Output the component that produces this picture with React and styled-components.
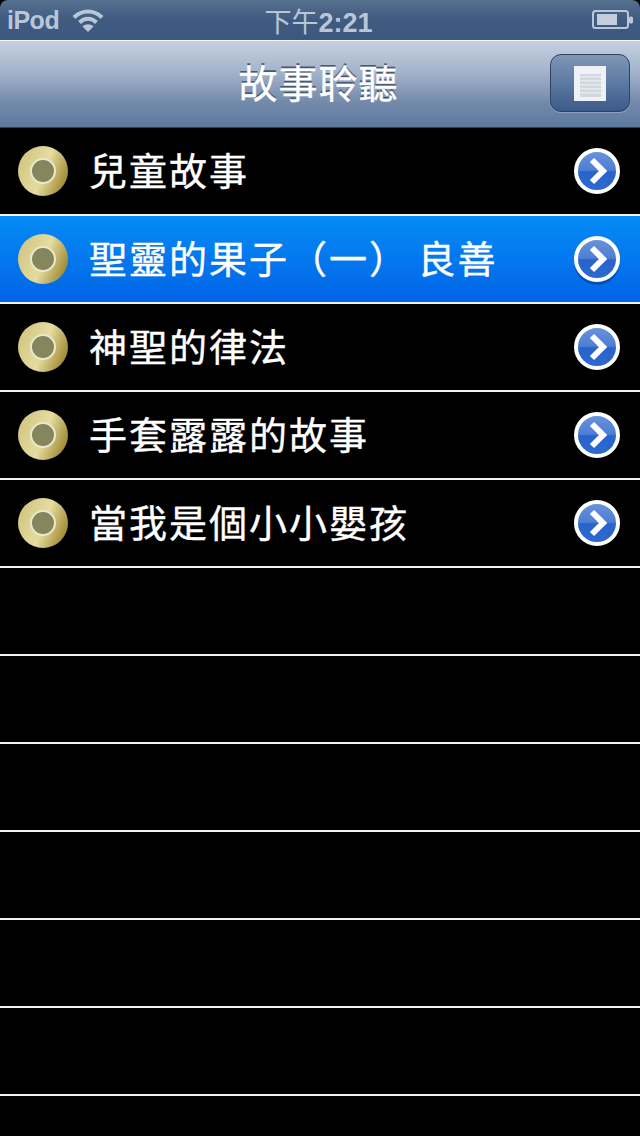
import React from 'react'
import styled, { createGlobalStyle } from 'styled-components'

const GlobalStyle = createGlobalStyle`
    html, body {
        margin: 0;
        padding: 0;
        background: #000;
    }
`

const Screen = styled.div`
    width: 640px;
    height: 1136px;
    overflow: hidden;
    background: #000;
    color: #fff;
    font-family: "Liberation Sans", "Noto Sans CJK TC", sans-serif;
`

const StatusBar = styled.div`
    height: 40px;
    box-sizing: border-box;
    border-radius: 8px 8px 0 0;
    padding: 0 6px 0 7px;
    display: grid;
    grid-template-columns: 1fr auto 1fr;
    align-items: center;
    background: linear-gradient(#56708f, #405b81 50%, #3d5880);
    color: #b9c6d7;
`

const StatusLeft = styled.div`
    display: flex;
    align-items: center;
    gap: 13px;
`

const Carrier = styled.span`
    font-size: 25px;
    font-weight: 700;
    letter-spacing: -0.5px;
`

const Clock = styled.div`
    margin-left: -4px;
    font-size: 27px;
    white-space: nowrap;
    b {
        font-weight: 700;
    }
`

const StatusRight = styled.div`
    display: flex;
    justify-content: flex-end;
`

const NavBar = styled.div`
    height: 88px;
    box-sizing: border-box;
    border-top: 1px solid #f4f6fa;
    border-bottom: 1px solid #2d3f5a;
    display: grid;
    grid-template-columns: 1fr auto 1fr;
    align-items: center;
    padding: 0 10px 0 7px;
    background: linear-gradient(#c6d1e1, #a3b3cb 36%, #7389aa 72%, #5d789f);
`

const NavTitle = styled.h1`
    grid-column: 2;
    margin: 0;
    font-size: 39px;
    line-height: 1;
    font-weight: 400;
    -webkit-text-stroke: 0.4px #fff;
    letter-spacing: 1px;
    color: #fff;
    text-shadow: 0 -2px 0 #4a5a74;
`

const NavButton = styled.button`
    grid-column: 3;
    justify-self: end;
    width: 80px;
    height: 58px;
    margin-bottom: 2px;
    padding: 0;
    display: flex;
    align-items: center;
    justify-content: center;
    box-sizing: border-box;
    border: 1px solid #2f4361;
    border-radius: 11px;
    background: linear-gradient(#7f95b5, #5d7aa2 50%, #3b5a88);
    box-shadow: 0 1px 0 #8fa2bd;
`

const RowList = styled.div`
    display: flex;
    flex-direction: column;
`

const Row = styled.div`
    height: 88px;
    flex-shrink: 0;
    box-sizing: border-box;
    border-bottom: 2px solid #f2f2f2;
    padding: 0 20px 0 18px;
    display: flex;
    align-items: center;
    background: ${p => p.$selected ? 'linear-gradient(#058bf6, #0264e6)' : '#000'};
`

const RowLabel = styled.span`
    flex: 1;
    margin: 2px 0 0 21px;
    font-size: 38px;
    font-weight: 400;
    -webkit-text-stroke: 0.4px #fff;
    line-height: 1;
    letter-spacing: 2px;
    word-spacing: -4px;
    white-space: pre;
    color: #fff;
`

const stories = [
    '兒童故事',
    '聖靈的果子（一） 良善',
    '神聖的律法',
    '手套露露的故事',
    '當我是個小小嬰孩',
    '', '', '', '', '', '', '',
]

function WifiIcon() {
    return (
        <svg width="32" height="24" viewBox="0 0 32 24">
            <path d="M2 9.5C10 1.5 22 1.5 30 9.5" fill="none" stroke="#b9c6d7" strokeWidth="4" />
            <path d="M7.5 14.5C12.5 9.5 19.5 9.5 24.5 14.5" fill="none" stroke="#b9c6d7" strokeWidth="4" />
            <path d="M16 24L10.5 18.5C13.5 15.5 18.5 15.5 21.5 18.5Z" fill="#b9c6d7" />
        </svg>
    )
}

function BatteryIcon() {
    return (
        <svg width="42" height="22" viewBox="0 0 42 22">
            <rect x="1" y="2" width="35" height="17" rx="2.5" fill="none" stroke="#b9c6d7" strokeWidth="2" />
            <rect x="5" y="5" width="20" height="11" fill="#c3cedc" />
            <rect x="37" y="7.5" width="4" height="7" rx="1.5" fill="#b9c6d7" />
        </svg>
    )
}

function PageIcon() {
    return (
        <svg width="32" height="35" viewBox="0 0 32 35">
            <rect width="32" height="35" fill="#eef1f5" />
            <rect x="6" y="8" width="21" height="23" fill="#d2d8e0" />
            {[10, 14, 18, 22, 26].map(y => (
                <rect key={y} x="6" y={y} width="21" height="1.5" fill="#e6e9ee" />
            ))}
        </svg>
    )
}

function BulletIcon({ id }) {
    return (
        <svg width="50" height="50" viewBox="0 0 50 50">
            <defs>
                <linearGradient id={id} x1="0" y1="0.2" x2="1" y2="0.6">
                    <stop offset="0" stopColor="#d0c47e" />
                    <stop offset="0.55" stopColor="#e4dca0" />
                    <stop offset="1" stopColor="#a08a34" />
                </linearGradient>
            </defs>
            <circle cx="25" cy="25" r="25" fill={`url(#${id})`} />
            <circle cx="25" cy="25" r="12" fill="#85855e" stroke="#ece8c8" strokeWidth="2" />
        </svg>
    )
}

function DisclosureIcon({ id, raised }) {
    return (
        <svg width="46" height="46" viewBox="0 0 46 46" style={{ overflow: 'visible' }}>
            <defs>
                <linearGradient id={id} x1="0" y1="0" x2="0" y2="1">
                    <stop offset="0" stopColor="#6a95dc" />
                    <stop offset="0.48" stopColor="#4d7fd4" />
                    <stop offset="0.52" stopColor="#2a63c8" />
                    <stop offset="1" stopColor="#2c6ad2" />
                </linearGradient>
            </defs>
            {raised && <circle cx="23" cy="26" r="23" fill="#03388f" opacity="0.55" />}
            <circle cx="23" cy="23" r="21" fill={`url(#${id})`} stroke="#fff" strokeWidth="4" />
            <path d="M18 12L29 23L18 34" fill="none" stroke="#fff" strokeWidth="6" strokeLinejoin="miter" />
        </svg>
    )
}

export default function App() {
    return (
        <>
            <GlobalStyle />
            <Screen>
                <StatusBar>
                    <StatusLeft>
                        <Carrier>iPod</Carrier>
                        <WifiIcon />
                    </StatusLeft>
                    <Clock>下午<b>2:21</b></Clock>
                    <StatusRight>
                        <BatteryIcon />
                    </StatusRight>
                </StatusBar>
                <NavBar>
                    <NavTitle>故事聆聽</NavTitle>
                    <NavButton>
                        <PageIcon />
                    </NavButton>
                </NavBar>
                <RowList>
                    {stories.map((title, index) => (
                        <Row key={index} $selected={index === 1}>
                            {title && (
                                <>
                                    <BulletIcon id={`bullet${index}`} />
                                    <RowLabel>{title}</RowLabel>
                                    <DisclosureIcon id={`disclosure${index}`} raised={index === 1} />
                                </>
                            )}
                        </Row>
                    ))}
                </RowList>
            </Screen>
        </>
    )
}
